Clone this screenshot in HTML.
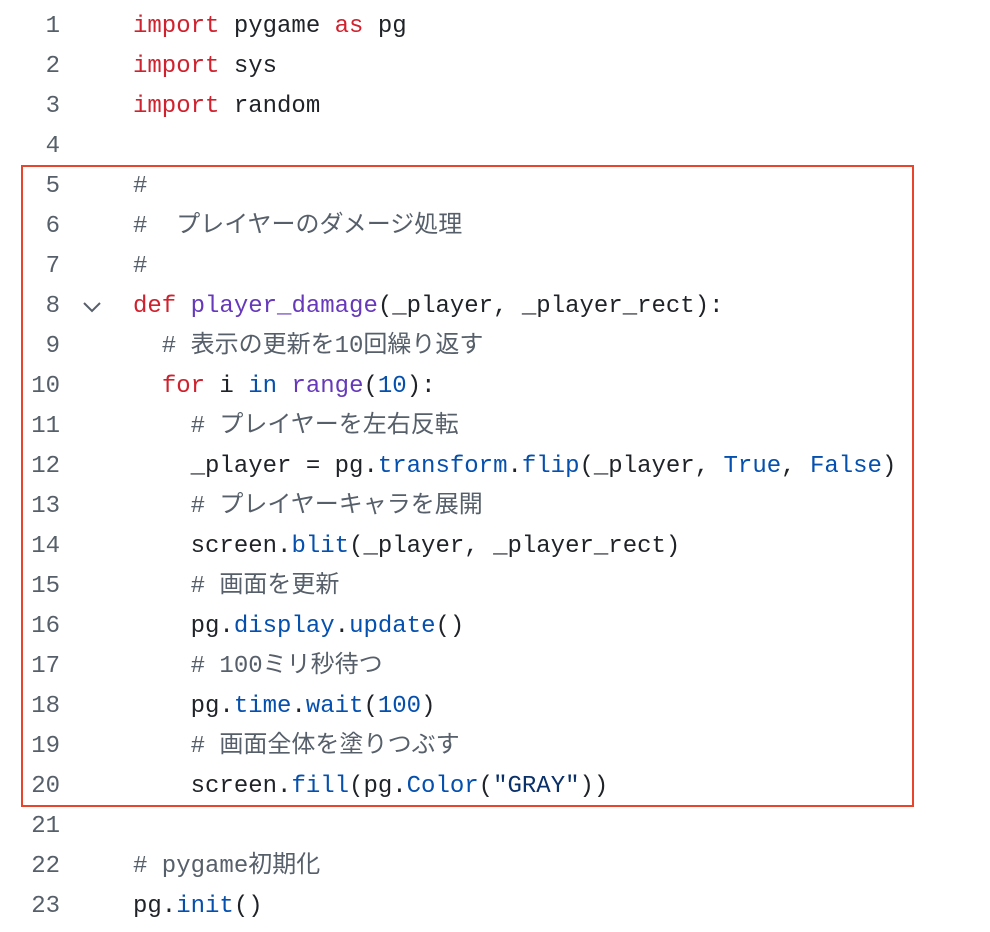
<!DOCTYPE html>
<html><head><meta charset="utf-8"><style>
body{margin:0;background:#fff;width:990px;height:932px;overflow:hidden;position:relative;font-family:"Liberation Mono","Noto Sans CJK JP",monospace;font-size:24px;color:#1f2328}
.l{position:absolute;left:0;height:40px;line-height:40px;white-space:pre;margin-top:2px}
.n{position:absolute;left:0;width:60px;text-align:right;color:#57606a}
.c{position:absolute;left:133px}
.k{color:#cf222e}.f{color:#6639ba}.b{color:#0550ae}.s{color:#0a3069}.m{color:#57606a}
.box{position:absolute;left:21px;top:165px;width:889px;height:638px;border:2px solid #e8452c}
</style></head><body>
<div class="box"></div>
<div class="l" style="top:5px"><span class="n">1</span><span class="c"><span class="k">import</span> pygame <span class="k">as</span> pg</span></div>
<div class="l" style="top:45px"><span class="n">2</span><span class="c"><span class="k">import</span> sys</span></div>
<div class="l" style="top:85px"><span class="n">3</span><span class="c"><span class="k">import</span> random</span></div>
<div class="l" style="top:125px"><span class="n">4</span></div>
<div class="l" style="top:165px"><span class="n">5</span><span class="c m">#</span></div>
<div class="l" style="top:205px"><span class="n">6</span><span class="c m">#  プレイヤーのダメージ処理</span></div>
<div class="l" style="top:245px"><span class="n">7</span><span class="c m">#</span></div>
<div class="l" style="top:285px"><span class="n">8</span><svg style="position:absolute;left:82px;top:14px" width="20" height="12"><path d="M2 2 L10 10 L18 2" fill="none" stroke="#57606a" stroke-width="2"/></svg><span class="c"><span class="k">def</span> <span class="f">player_damage</span>(_player, _player_rect):</span></div>
<div class="l" style="top:325px"><span class="n">9</span><span class="c m">  # 表示の更新を10回繰り返す</span></div>
<div class="l" style="top:365px"><span class="n">10</span><span class="c">  <span class="k">for</span> i <span class="b">in</span> <span class="f">range</span>(<span class="b">10</span>):</span></div>
<div class="l" style="top:405px"><span class="n">11</span><span class="c m">    # プレイヤーを左右反転</span></div>
<div class="l" style="top:445px"><span class="n">12</span><span class="c">    _player = pg.<span class="b">transform</span>.<span class="b">flip</span>(_player, <span class="b">True</span>, <span class="b">False</span>)</span></div>
<div class="l" style="top:485px"><span class="n">13</span><span class="c m">    # プレイヤーキャラを展開</span></div>
<div class="l" style="top:525px"><span class="n">14</span><span class="c">    screen.<span class="b">blit</span>(_player, _player_rect)</span></div>
<div class="l" style="top:565px"><span class="n">15</span><span class="c m">    # 画面を更新</span></div>
<div class="l" style="top:605px"><span class="n">16</span><span class="c">    pg.<span class="b">display</span>.<span class="b">update</span>()</span></div>
<div class="l" style="top:645px"><span class="n">17</span><span class="c m">    # 100ミリ秒待つ</span></div>
<div class="l" style="top:685px"><span class="n">18</span><span class="c">    pg.<span class="b">time</span>.<span class="b">wait</span>(<span class="b">100</span>)</span></div>
<div class="l" style="top:725px"><span class="n">19</span><span class="c m">    # 画面全体を塗りつぶす</span></div>
<div class="l" style="top:765px"><span class="n">20</span><span class="c">    screen.<span class="b">fill</span>(pg.<span class="b">Color</span>(<span class="s">"GRAY"</span>))</span></div>
<div class="l" style="top:805px"><span class="n">21</span></div>
<div class="l" style="top:845px"><span class="n">22</span><span class="c m"># pygame初期化</span></div>
<div class="l" style="top:885px"><span class="n">23</span><span class="c">pg.<span class="b">init</span>()</span></div>
</body></html>
